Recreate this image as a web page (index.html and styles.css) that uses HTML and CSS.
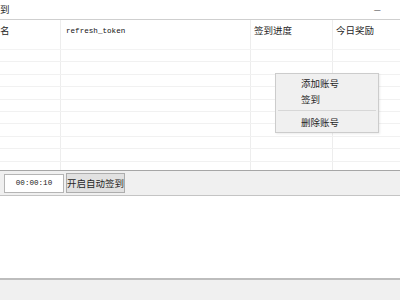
FILE: index.html
```html
<!DOCTYPE html>
<html lang="zh-CN">
<head>
  <meta charset="UTF-8">
  <title>签到</title>
  <link rel="stylesheet" href="styles.css">
</head>
<body>
  <div class="titlebar">
    <span class="title">到</span>
    <span class="min">—</span>
  </div>
  <div class="grid">
    <div class="row head">
      <div class="cell c1">名</div>
      <div class="cell c2 mono">refresh_token</div>
      <div class="cell c3">签到进度</div>
      <div class="cell c4">今日奖励</div>
    </div>
    <div class="row"><div class="cell c1"></div><div class="cell c2"></div><div class="cell c3"></div><div class="cell c4"></div></div>
    <div class="row"><div class="cell c1"></div><div class="cell c2"></div><div class="cell c3"></div><div class="cell c4"></div></div>
    <div class="row"><div class="cell c1"></div><div class="cell c2"></div><div class="cell c3"></div><div class="cell c4"></div></div>
    <div class="row"><div class="cell c1"></div><div class="cell c2"></div><div class="cell c3"></div><div class="cell c4"></div></div>
    <div class="row"><div class="cell c1"></div><div class="cell c2"></div><div class="cell c3"></div><div class="cell c4"></div></div>
    <div class="row"><div class="cell c1"></div><div class="cell c2"></div><div class="cell c3"></div><div class="cell c4"></div></div>
    <div class="row"><div class="cell c1"></div><div class="cell c2"></div><div class="cell c3"></div><div class="cell c4"></div></div>
    <div class="row"><div class="cell c1"></div><div class="cell c2"></div><div class="cell c3"></div><div class="cell c4"></div></div>
    <div class="row"><div class="cell c1"></div><div class="cell c2"></div><div class="cell c3"></div><div class="cell c4"></div></div>
    <div class="row"><div class="cell c1"></div><div class="cell c2"></div><div class="cell c3"></div><div class="cell c4"></div></div>

    <div class="menu">
      <div class="item">添加账号</div>
      <div class="item">签到</div>
      <div class="sep"></div>
      <div class="item">删除账号</div>
    </div>
  </div>
  <div class="toolbar">
    <input class="time mono" type="text" value="00:00:10">
    <button class="btn">开启自动签到</button>
  </div>
  <div class="log"></div>
  <div class="status"></div>
</body>
</html>
```

FILE: styles.css
```css
body {
  margin: 0;
  width: 400px;
  height: 300px;
  overflow: hidden;
  font-family: "Noto Sans CJK SC", "Liberation Sans", sans-serif;
  font-size: 9.5px;
  color: #262626;
  background: #fff;
  display: flex;
  flex-direction: column;
}
.mono {
  font-family: "Liberation Mono", "Noto Sans CJK SC", monospace;
  font-size: 7.6px;
  color: #111;
}
.titlebar {
  height: 19px;
  border-bottom: 1px solid #cfcfcf;
  display: flex;
  align-items: center;
  justify-content: space-between;
  padding: 0 19px 0 0;
  flex-shrink: 0;
}
.title {
  margin-top: -1px;
}
.min {
  font-size: 8px;
  color: #333;
}
.grid {
  height: 150px;
  flex-shrink: 0;
  position: relative;
  overflow: hidden;
}
.row {
  display: flex;
  height: 12.4px;
  border-bottom: 1px solid #f1f1f1;
  box-sizing: border-box;
}
.row.head {
  height: 30px;
  border-bottom-color: #f3f3f3;
}
.cell {
  box-sizing: border-box;
  border-right: 1px solid #ededed;
  padding: 4px 0 0 3px;
  white-space: nowrap;
}
.head .cell {
  line-height: 13px;
}
.c1 { width: 61px; padding-left: 0; }
.c2 { width: 190px; padding-left: 5px; padding-top: 5px; }
.c3 { width: 82px; }
.c4 { flex: 1; border-right: none; }
.menu {
  position: absolute;
  left: 275px;
  top: 53px;
  width: 104px;
  height: 60px;
  box-sizing: border-box;
  background: #f0f0f0;
  border: 1px solid #cccccc;
  box-shadow: 1px 1px 2px rgba(0,0,0,0.08);
  padding: 1px 0;
}
.item {
  height: 16px;
  line-height: 16px;
  padding-left: 25px;
}
.sep {
  height: 1px;
  background: #d7d7d7;
  margin: 3px 2px 3px 2px;
}
.toolbar {
  height: 26px;
  box-sizing: border-box;
  flex-shrink: 0;
  background: #f0f0f0;
  border-top: 1px solid #a6a6a6;
  border-bottom: 1px solid #c4c4c4;
  display: flex;
  align-items: center;
  gap: 2px;
  padding: 0 0 0 4px;
}
.time {
  width: 60px;
  height: 19px;
  box-sizing: border-box;
  border: 1px solid #b5b5b5;
  background: #fff;
  text-align: center;
  padding: 0;
  margin: 0;
  color: #222;
}
.btn {
  width: 59px;
  height: 20px;
  box-sizing: border-box;
  border: 1px solid #adadad;
  background: #e1e1e1;
  font-family: "Noto Sans CJK SC", sans-serif;
  font-size: 9.5px;
  color: #262626;
  padding: 0;
  margin: 0;
}
.log {
  flex: 1;
  background: #fff;
}
.status {
  height: 20px;
  flex-shrink: 0;
  background: #f0f0f0;
  border-top: 2px solid #bdbdbd;
}
```
